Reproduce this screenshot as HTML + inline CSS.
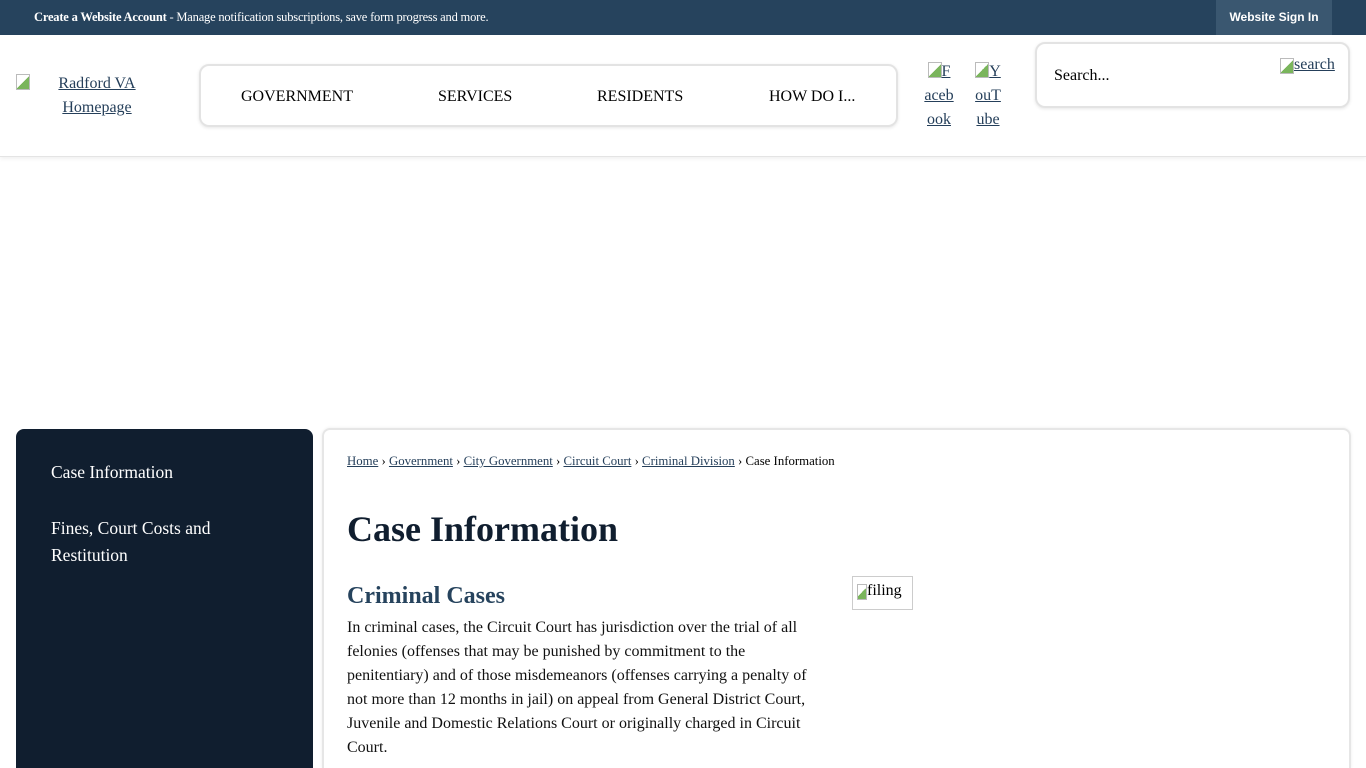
<!DOCTYPE html>
<html style="width:1366px;height:768px;overflow:hidden"><head><meta charset="utf-8"><style>
*{box-sizing:border-box;margin:0;padding:0}
body{width:1366px;height:768px;overflow:hidden;background:#fff;font-family:"Liberation Serif",serif;color:#000;position:relative}
a{color:#253f5a;text-decoration:underline}
.top{position:absolute;left:0;top:0;width:1366px;height:35px;background:#26435d;color:#fff;font-size:12.5px}
.top .msg{position:absolute;left:34px;top:10px;letter-spacing:-0.2px;white-space:nowrap}
.top .sign{position:absolute;left:1216px;top:0;width:116px;height:35px;background:#3a5770;font-family:"Liberation Sans",sans-serif;font-weight:bold;font-size:12px;text-align:center;line-height:35px}
.hdr{position:absolute;left:0;top:35px;width:1366px;height:122px;border-bottom:1px solid #e4e4e4;box-shadow:0 2px 4px rgba(0,0,0,.06)}
.logo{position:absolute;left:16px;top:72px;width:162px;text-align:center;font-size:16px;line-height:24px}
.bi{display:inline-block;width:14px;height:16px;border:1px solid #bbb;background:linear-gradient(135deg,#fff 50%,#7ab55c 50%);vertical-align:top;margin-top:2px}
.nav{position:absolute;left:199px;top:64px;width:699px;height:63px;border:2px solid #e3e3e3;border-radius:10px;box-shadow:0 1px 3px rgba(0,0,0,.1);font-size:16px}
.nav span{position:absolute;top:22px}
.soc{position:absolute;top:60px;width:34px;font-size:16px;line-height:24px;text-align:center}
.search{position:absolute;left:1035px;top:42px;width:315px;height:66px;border:2px solid #e3e3e3;border-radius:10px;box-shadow:0 1px 3px rgba(0,0,0,.1);font-size:16px}
.side{position:absolute;left:16px;top:429px;width:297px;height:339px;background:#101e2f;border-radius:8px 8px 0 0;color:#fff;font-size:17.5px;line-height:27px}
.main{position:absolute;left:322px;top:428px;width:1029px;height:340px;border:2px solid #e6e6e6;border-bottom:none;border-radius:8px 8px 0 0;box-shadow:0 0 3px rgba(0,0,0,.08)}
.bc{position:absolute;left:347px;top:454px;font-size:12.8px;white-space:nowrap}
h1{position:absolute;left:347px;top:508px;font-size:36px;color:#101e2f;font-weight:bold}
h2{position:absolute;left:347px;top:583px;font-size:24px;color:#26435d;font-weight:bold}
.p{position:absolute;left:347px;top:616px;font-size:16px;line-height:24px;color:#111;white-space:nowrap}
.fil{position:absolute;left:852px;top:576px;width:61px;height:34px;border:1px solid #ccc;font-size:16px;padding:5px 0 0 4px}
</style></head><body>
<div class="top"><div class="msg"><b>Create a Website Account</b> - Manage notification subscriptions, save form progress and more.</div><div class="sign">Website Sign In</div></div>
<div class="hdr"></div>
<div class="logo"><span class="bi" style="position:absolute;left:0;top:0"></span><a href="#">Radford VA<br>Homepage</a></div>
<div class="nav"><span style="left:40px">GOVERNMENT</span><span style="left:237px">SERVICES</span><span style="left:396px">RESIDENTS</span><span style="left:568px">HOW DO I...</span></div>
<div class="soc" style="left:922px"><span class="bi"></span><a href="#">F<br>aceb<br>ook</a></div>
<div class="soc" style="left:971px"><span class="bi"></span><a href="#">Y<br>ouT<br>ube</a></div>
<div class="search"><span style="position:absolute;left:17px;top:23px">Search...</span><span style="position:absolute;left:243px;top:12px"><span class="bi"></span><a href="#">search</a></span></div>
<div class="side"><div style="position:absolute;left:35px;top:30px">Case Information</div><div style="position:absolute;left:35px;top:86px;width:220px">Fines, Court Costs and Restitution</div></div>
<div class="main"></div>
<div class="bc"><a href="#">Home</a> › <a href="#">Government</a> › <a href="#">City Government</a> › <a href="#">Circuit Court</a> › <a href="#">Criminal Division</a> › Case Information</div>
<h1>Case Information</h1>
<h2>Criminal Cases</h2>
<div class="p">In criminal cases, the Circuit Court has jurisdiction over the trial of all<br>felonies (offenses that may be punished by commitment to the<br>penitentiary) and of those misdemeanors (offenses carrying a penalty of<br>not more than 12 months in jail) on appeal from General District Court,<br>Juvenile and Domestic Relations Court or originally charged in Circuit<br>Court.</div>
<div class="fil"><span class="bi" style="width:10px"></span>filing</div>
</body></html>
